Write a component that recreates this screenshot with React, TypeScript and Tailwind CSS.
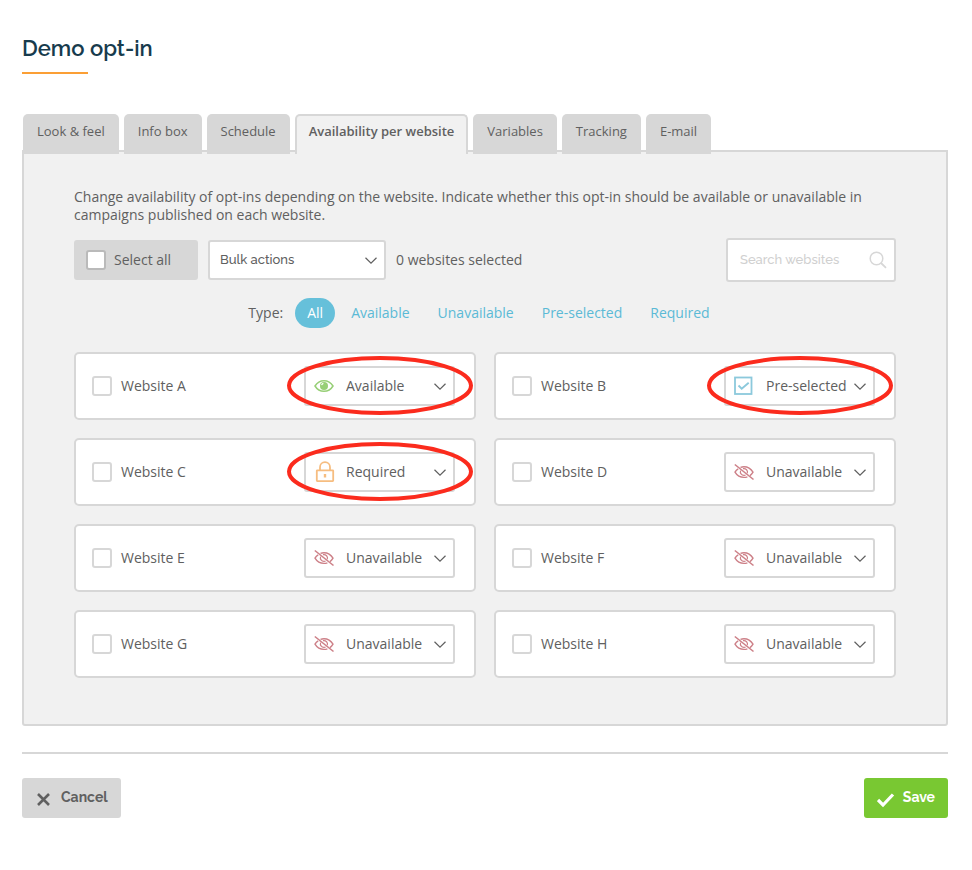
import React, { useState } from 'react';

type Status = 'available' | 'preselected' | 'required' | 'unavailable';

interface Website {
  id: string;
  name: string;
  status: Status;
  highlighted?: boolean;
}

const TABS = ['Look & feel', 'Info box', 'Schedule', 'Availability per website', 'Variables', 'Tracking', 'E-mail'];

const TYPES = ['All', 'Available', 'Unavailable', 'Pre-selected', 'Required'];

const STATUSES: { value: Status; label: string }[] = [
  { value: 'available', label: 'Available' },
  { value: 'preselected', label: 'Pre-selected' },
  { value: 'required', label: 'Required' },
  { value: 'unavailable', label: 'Unavailable' }
];

const WEBSITES: Website[] = [
  { id: 'a', name: 'Website A', status: 'available', highlighted: true },
  { id: 'b', name: 'Website B', status: 'preselected', highlighted: true },
  { id: 'c', name: 'Website C', status: 'required', highlighted: true },
  { id: 'd', name: 'Website D', status: 'unavailable' },
  { id: 'e', name: 'Website E', status: 'unavailable' },
  { id: 'f', name: 'Website F', status: 'unavailable' },
  { id: 'g', name: 'Website G', status: 'unavailable' },
  { id: 'h', name: 'Website H', status: 'unavailable' }
];

const Chevron: React.FC = () => (
  <svg className="pointer-events-none absolute right-2 top-1/2 -translate-y-1/2" width="14" height="14" viewBox="0 0 14 14" fill="none" stroke="#5f5f5f" strokeWidth="1.2">
    <path d="M1.500 4.800 7 10.200 12.500 4.800" />
  </svg>
);

const StatusIcon: React.FC<{ status: Status }> = ({ status }) => {
  if (status === 'available') {
    return (
      <svg width="20" height="20" viewBox="0 0 20 20" fill="none">
        <path d="M1 10C3.200 6.400 6.300 4.700 10 4.700S16.800 6.400 19 10C16.800 13.600 13.700 15.300 10 15.300S3.200 13.600 1 10Z" stroke="#97cf76" strokeWidth="1.500" />
        <circle cx="10" cy="10" r="4" fill="#97cf76" />
        <path d="M7.600 9.200A2.600 2.600 0 0 1 9.400 7.400" stroke="#fff" strokeWidth="1.200" />
      </svg>
    );
  }
  if (status === 'preselected') {
    return (
      <svg width="20" height="20" viewBox="0 0 20 20" fill="none" stroke="#8cc9dc">
        <rect x="1" y="1.500" width="16.500" height="16.500" strokeWidth="1.800" />
        <path d="m4.500 9.500 3.200 3.200 7-6" strokeWidth="1.900" />
      </svg>
    );
  }
  if (status === 'required') {
    return (
      <svg width="22" height="22" viewBox="0 0 22 22" fill="none" stroke="#f6bd80" strokeWidth="1.800">
        <rect x="2.800" y="9.300" width="16.400" height="10.800" rx="0.500" />
        <path d="M6 9.300V6.200a5 5 0 0 1 10 0v3.100" />
        <path d="M11 13v3.500" strokeWidth="2.400" />
      </svg>
    );
  }
  return (
    <svg width="20" height="20" viewBox="0 0 20 20" fill="none" stroke="#cd8088">
      <path d="M4.200 6.800C2.800 7.600 1.800 8.700 1 10.200 3.200 13.900 6.300 15.400 10 15.400c1.200 0 2.300-.2 3.400-.6M6.500 5.300c1.100-.4 2.300-.6 3.500-.6 3.700 0 6.800 1.800 9 5.500-.8 1.400-1.800 2.500-3 3.400" strokeWidth="1.400" />
      <path d="M6.600 8.600c-.9 2.600.9 4.800 3.400 4.800.6 0 1.100-.1 1.600-.4M9 6.700c2.900-.6 5.200 1.900 4.300 4.500" strokeWidth="1.200" />
      <path d="M.8 2.500 19.500 17.500" strokeWidth="1.600" />
    </svg>
  );
};

const checkboxStyle = 'size-5 shrink-0 appearance-none rounded-[3px] border-2 bg-white checked:bg-[#66c0da]';

const WebsiteCard: React.FC<{ website: Website; checked: boolean; onToggle: () => void }> = ({ website, checked, onToggle }) => {
  const [status, setStatus] = useState<Status>(website.status);

  return (
    <li className="flex h-[68px] items-center justify-between rounded-[5px] border-2 border-[#d7d7d7] bg-white pl-4 pr-[19px]">
      <label className="flex items-center gap-[9px]">
        <input type="checkbox" className={`${checkboxStyle} border-[#d7d7d7]`} checked={checked} onChange={onToggle} />
        {website.name}
      </label>
      <div className="relative w-[151px]">
        <select
          aria-label={`Availability of ${website.name}`}
          className="block h-10 w-full appearance-none rounded-[3px] border-2 border-[#d7d7d7] bg-white pl-10"
          value={status}
          onChange={e => setStatus(e.target.value as Status)}
        >
          {STATUSES.map(s => (
            <option key={s.value} value={s.value}>{s.label}</option>
          ))}
        </select>
        <span className="pointer-events-none absolute inset-y-0 left-[10px] flex items-center">
          <StatusIcon status={status} />
        </span>
        <Chevron />
        {website.highlighted && (
          <svg className="pointer-events-none absolute -left-[17px] -top-[10px]" width="186" height="60" viewBox="0 0 186 60" fill="none">
            <ellipse cx="93" cy="29.500" rx="91" ry="27.500" stroke="#fb2b1d" strokeWidth="4" />
          </svg>
        )}
      </div>
    </li>
  );
};

const App: React.FC = () => {
  const [activeTab, setActiveTab] = useState('Availability per website');
  const [type, setType] = useState('All');
  const [selected, setSelected] = useState<string[]>([]);

  const toggle = (id: string) =>
    setSelected(prev => (prev.includes(id) ? prev.filter(x => x !== id) : [...prev, id]));

  const allSelected = selected.length === WEBSITES.length;

  return (
    <main className="min-h-screen bg-white pb-13 pl-[22px] pr-6 pt-8 font-['Open_Sans',sans-serif] text-sm text-[#606060]">
      <h1 className="font-['Raleway','Lato',sans-serif] text-[22px] font-semibold leading-8 text-[#173b4d]">Demo opt-in</h1>
      <div className="mt-2 h-[2px] w-[66px] bg-[#fb9f35]" />

      <div role="tablist" className="relative z-10 -mb-1 ml-px mt-10 flex gap-[5px] text-[13px]">
        {TABS.map(tab => (
          <button
            key={tab}
            type="button"
            role="tab"
            aria-selected={tab === activeTab}
            onClick={() => setActiveTab(tab)}
            className={
              tab === activeTab
                ? 'h-10 whitespace-nowrap rounded-t-[5px] border-2 border-b-0 border-[#d7d7d7] bg-[#f1f1f1] px-3 pb-2 font-semibold'
                : 'h-10 whitespace-nowrap rounded-t-[5px] bg-[#d7d7d7] px-[14px] pb-[6px]'
            }
          >
            {tab}
          </button>
        ))}
      </div>

      <section className="rounded-b-[3px] border-2 border-[#d7d7d7] bg-[#f1f1f1] px-[50px] pb-[46px] pt-9">
        <p className="leading-[18px]">
          Change availability of opt-ins depending on the website. Indicate whether this opt-in should be available or unavailable in campaigns published on each website.
        </p>

        <div className="mt-[14px] flex items-center gap-[10px]">
          <label className="flex h-10 w-[124px] items-center gap-2 rounded-[3px] bg-[#d7d7d7] pl-3">
            <input
              type="checkbox"
              className={`${checkboxStyle} border-[#bababa]`}
              checked={allSelected}
              onChange={() => setSelected(allSelected ? [] : WEBSITES.map(w => w.id))}
            />
            Select all
          </label>
          <div className="relative w-[178px]">
            <select
              aria-label="Bulk actions"
              className="block h-10 w-full appearance-none rounded-[3px] border-2 border-[#d7d7d7] bg-white pl-[10px] font-['Raleway','Lato',sans-serif] text-[13px] font-medium"
            >
              <option>Bulk actions</option>
            </select>
            <Chevron />
          </div>
          <span>{selected.length} websites selected</span>
          <div className="relative ml-auto w-[170px]">
            <input
              type="search"
              aria-label="Search websites"
              placeholder="Search websites"
              className="block h-11 w-full rounded-[3px] border-2 border-[#d7d7d7] bg-white pb-[2px] pl-3 pr-9 font-['Raleway','Lato',sans-serif] text-[13px] font-medium placeholder:text-[#d0d0d0]"
            />
            <svg className="pointer-events-none absolute right-[9px] top-1/2 -translate-y-1/2" width="18" height="18" viewBox="0 0 18 18" fill="none" stroke="#d7d7d7" strokeWidth="1.500">
              <circle cx="7.500" cy="7.500" r="6.300" />
              <path d="m12 12 5 4.800" strokeWidth="1.800" />
            </svg>
          </div>
        </div>

        <div className="mt-4 flex items-center justify-center gap-1">
          <span className="mr-2">Type:</span>
          {TYPES.map(t => (
            <button
              key={t}
              type="button"
              onClick={() => setType(t)}
              className={
                t === type
                  ? 'h-[30px] rounded-full bg-[#66c0da] px-3 font-medium text-white'
                  : 'h-[30px] rounded-full px-3 text-[#5bbad6]'
              }
            >
              {t}
            </button>
          ))}
        </div>

        <ul className="mt-6 grid grid-cols-2 gap-[18px]">
          {WEBSITES.map(w => (
            <WebsiteCard key={w.id} website={w} checked={selected.includes(w.id)} onToggle={() => toggle(w.id)} />
          ))}
        </ul>
      </section>

      <footer className="mt-[26px] flex justify-between border-t-2 border-[#d7d7d7] pt-6 font-['Raleway','Inter',sans-serif] font-bold">
        <button type="button" className="flex h-10 items-center gap-2 rounded-[3px] bg-[#d7d7d7] px-[13px] pb-[2px]">
          <svg className="mt-1" width="18" height="18" viewBox="0 0 18 18" fill="none" stroke="#606060" strokeWidth="2.600">
            <path d="M3 4 14 15M14 4 3 15" />
          </svg>
          Cancel
        </button>
        <button type="button" className="flex h-10 items-center gap-2 rounded-[3px] bg-[#79c832] px-[13px] pb-[2px] text-white">
          <svg className="mt-1" width="18" height="18" viewBox="0 0 18 18" fill="none" stroke="#fff" strokeWidth="3.200">
            <path d="m1 10 5 5L16 4.500" />
          </svg>
          Save
        </button>
      </footer>
    </main>
  );
};

export default App;
